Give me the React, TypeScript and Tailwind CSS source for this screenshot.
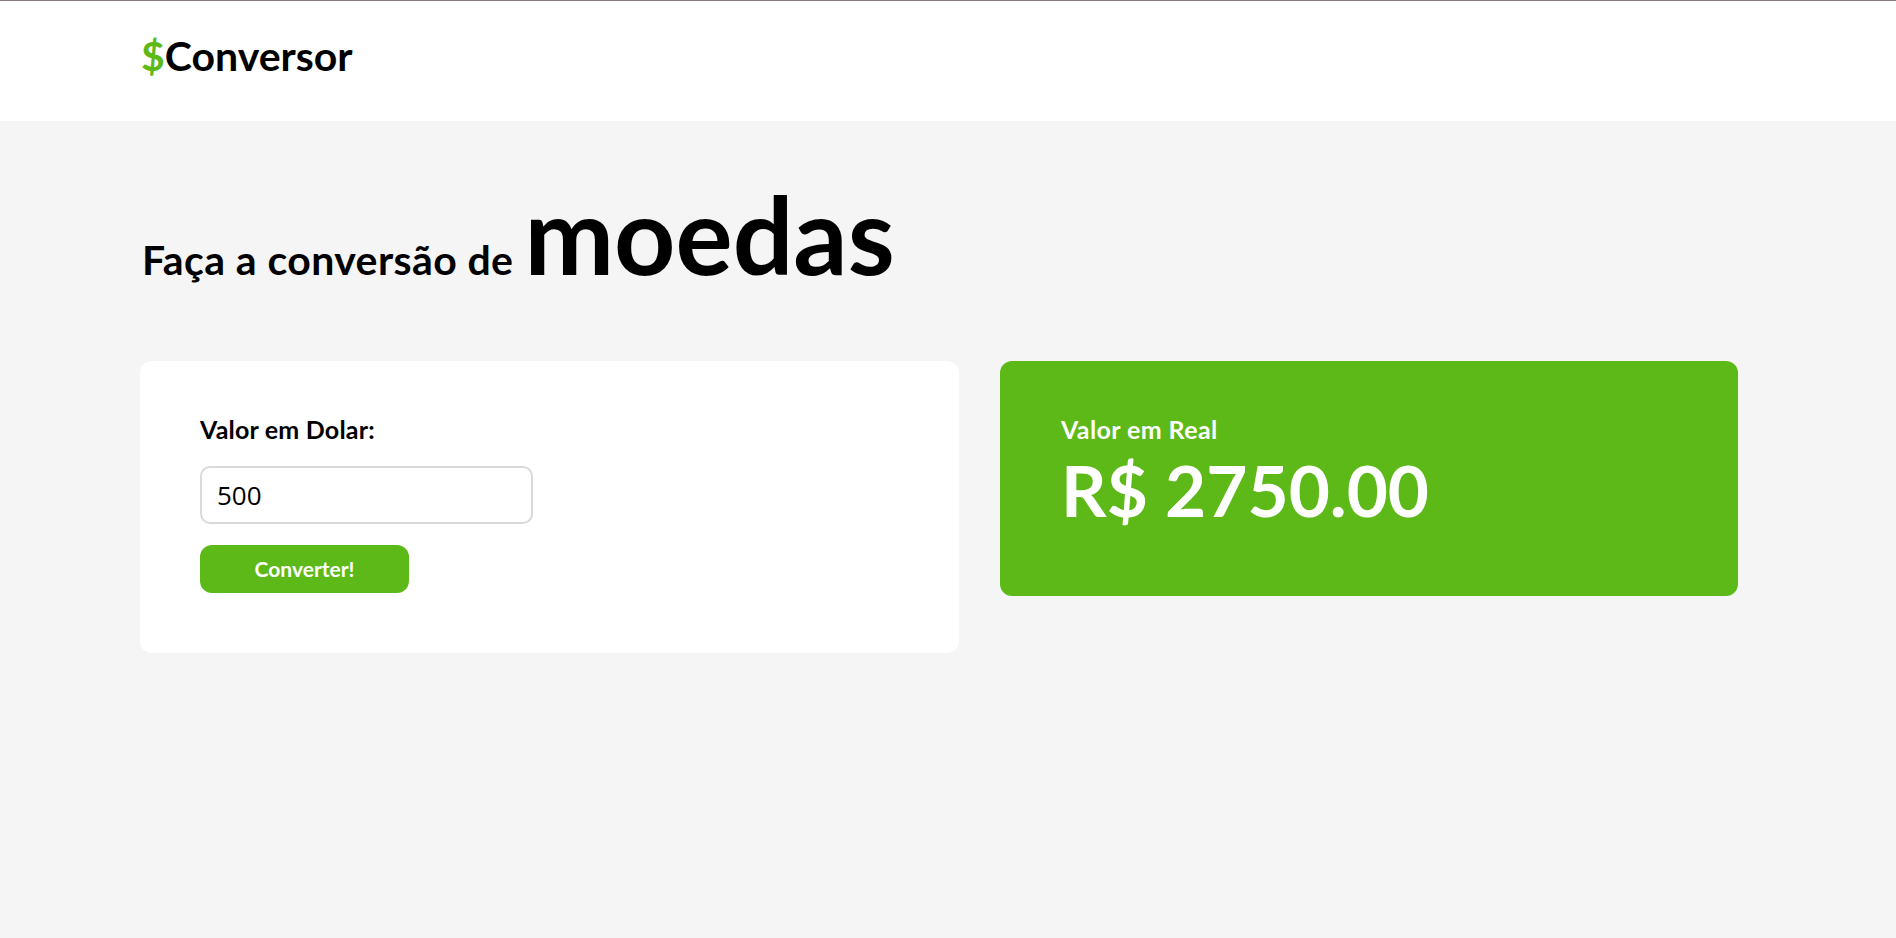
import { useState } from 'react';

const font = { fontFamily: 'Lato, "Open Sans", sans-serif' };

const App = () => {
  const [dolar, setDolar] = useState('500');
  const [real, setReal] = useState('2750.00');

  const converter = () => {
    const valor = parseFloat(dolar.replace(',', '.')) || 0;
    setReal((valor * 5.5).toFixed(2));
  };

  return (
    <div className="min-h-screen bg-[#f5f5f5] font-['Lato',sans-serif] text-black">
      {/* Header */}
      <header className="h-[121px] border-t border-[#857c7a] bg-white pl-[141px] pt-[34px]">
        <h2 className="text-[41px] font-bold leading-none">
          <span className="text-[#5cb917]">$</span>Conversor
        </h2>
      </header>

      <main className="pl-[140px]">
        {/* Title */}
        <h1 className="mt-[59px] flex items-baseline gap-[11px] font-bold leading-none">
          <span className="pl-[2px] text-[41px] tracking-[0.4px]">Faça a conversão de</span>
          <span className="text-[107px]">moedas</span>
        </h1>

        {/* Cards */}
        <div className="mt-[74px] flex items-start gap-[41px]">
          <div className="w-[819px] rounded-[12px] bg-white px-[60px] pt-[56px] pb-[60px]">
            <label className="block text-[25px] font-bold leading-none tracking-[0.2px]" style={font}>
              Valor em Dolar:
            </label>
            <input
              type="text"
              value={dolar}
              onChange={(e) => setDolar(e.target.value)}
              className="mt-[24px] block h-[58px] w-[333px] rounded-[10px] border-2 border-[#d9d9d9] bg-white pl-[15px] font-['Open_Sans',sans-serif] text-[26px] text-black outline-none"
            />
            <button
              type="button"
              onClick={converter}
              className="mt-[21px] flex h-[48px] w-[209px] items-center justify-center rounded-[12px] bg-[#5cb917] text-[21px] font-bold text-white"
            >
              Converter!
            </button>
          </div>

          <div className="h-[235px] w-[738px] rounded-[12px] bg-[#5cb917] px-[61px] pt-[56px] text-white">
            <p className="text-[25px] font-bold leading-none tracking-[0.4px]">Valor em Real</p>
            <p className="mt-[12px] text-[71px] font-bold leading-none">R$ {real}</p>
          </div>
        </div>
      </main>
    </div>
  );
};

export default App;
